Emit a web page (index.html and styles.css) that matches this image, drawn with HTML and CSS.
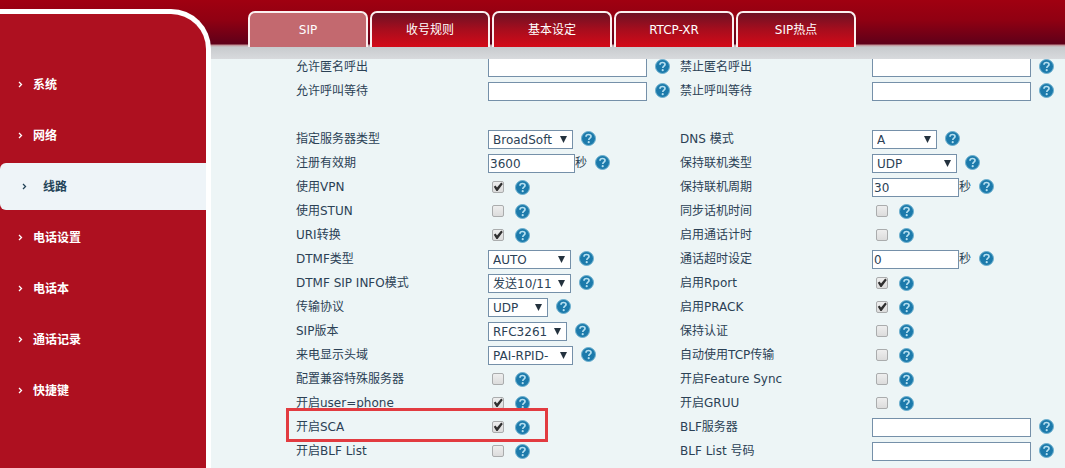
FILE: index.html
```html
<!DOCTYPE html>
<html lang="zh-CN">
<head>
<meta charset="utf-8">
<meta name="viewport" content="width=device-width, initial-scale=1">
<title>SIP 线路设置</title>
<link rel="stylesheet" href="styles.css">
</head>
<body>
<svg class="sprite" aria-hidden="true">
  <symbol id="help" viewBox="0 0 15 15">
    <circle cx="7.5" cy="7.5" r="7" fill="#1c7aab" stroke="#6db0cf" stroke-width="1"/>
    <path d="M5 5.7C5 4.2 6 3.5 7.5 3.5s2.5.8 2.5 2c0 1.6-2.2 1.7-2.2 3.4" fill="none" stroke="#b5dff0" stroke-width="1.7"/>
    <circle cx="7.7" cy="11.2" r="1.1" fill="#b5dff0"/>
  </symbol>
  <symbol id="chevron" viewBox="0 0 5 7">
    <path d="M1 1l2.5 2.5L1 6" fill="none" stroke="currentColor" stroke-width="1.3"/>
  </symbol>
</svg>
<div class="page">
  <header class="topbar">
    <nav class="tabs">
      <a class="tab tab-active" href="#sip">SIP</a>
      <a class="tab" href="#dial">收号规则</a>
      <a class="tab" href="#basic">基本设定</a>
      <a class="tab" href="#rtcp">RTCP-XR</a>
      <a class="tab" href="#hotspot">SIP热点</a>
    </nav>
  </header>
  <nav class="sidebar">
    <a class="item" href="#system"><svg class="chevron"><use href="#chevron"/></svg>系统</a>
    <a class="item" href="#network"><svg class="chevron"><use href="#chevron"/></svg>网络</a>
    <a class="item item-active" href="#line"><svg class="chevron"><use href="#chevron"/></svg>线路</a>
    <a class="item" href="#phone"><svg class="chevron"><use href="#chevron"/></svg>电话设置</a>
    <a class="item" href="#book"><svg class="chevron"><use href="#chevron"/></svg>电话本</a>
    <a class="item" href="#log"><svg class="chevron"><use href="#chevron"/></svg>通话记录</a>
    <a class="item" href="#keys"><svg class="chevron"><use href="#chevron"/></svg>快捷键</a>
  </nav>
  <main class="content">
    <form class="form">
      <label class="name" for="anon-on">允许匿名呼出</label>
      <div class="field"><input class="text long" id="anon-on" type="text"><button class="help" type="button" aria-label="帮助"><svg><use href="#help"/></svg></button></div>
      <label class="name" for="anon-off">禁止匿名呼出</label>
      <div class="field"><input class="text long" id="anon-off" type="text"><button class="help" type="button" aria-label="帮助"><svg><use href="#help"/></svg></button></div>

      <label class="name" for="wait-on">允许呼叫等待</label>
      <div class="field"><input class="text long" id="wait-on" type="text"><button class="help" type="button" aria-label="帮助"><svg><use href="#help"/></svg></button></div>
      <label class="name" for="wait-off">禁止呼叫等待</label>
      <div class="field"><input class="text long" id="wait-off" type="text"><button class="help" type="button" aria-label="帮助"><svg><use href="#help"/></svg></button></div>

      <div class="spacer"></div>

      <label class="name" for="server">指定服务器类型</label>
      <div class="field"><span class="pick"><select class="w-l" id="server"><option>BroadSoft</option></select></span><button class="help" type="button" aria-label="帮助"><svg><use href="#help"/></svg></button></div>
      <label class="name" for="dns">DNS 模式</label>
      <div class="field"><span class="pick"><select class="w-s" id="dns"><option>A</option></select></span><button class="help" type="button" aria-label="帮助"><svg><use href="#help"/></svg></button></div>

      <label class="name" for="expire">注册有效期</label>
      <div class="field"><input class="text short" id="expire" type="text" value="3600"><span class="unit">秒</span><button class="help" type="button" aria-label="帮助"><svg><use href="#help"/></svg></button></div>
      <label class="name" for="keep">保持联机类型</label>
      <div class="field"><span class="pick"><select class="w-l" id="keep"><option>UDP</option></select></span><button class="help" type="button" aria-label="帮助"><svg><use href="#help"/></svg></button></div>

      <label class="name" for="vpn">使用VPN</label>
      <div class="field"><input class="check" id="vpn" type="checkbox" checked><button class="help" type="button" aria-label="帮助"><svg><use href="#help"/></svg></button></div>
      <label class="name" for="period">保持联机周期</label>
      <div class="field"><input class="text short" id="period" type="text" value="30"><span class="unit">秒</span><button class="help" type="button" aria-label="帮助"><svg><use href="#help"/></svg></button></div>

      <label class="name" for="stun">使用STUN</label>
      <div class="field"><input class="check" id="stun" type="checkbox"><button class="help" type="button" aria-label="帮助"><svg><use href="#help"/></svg></button></div>
      <label class="name" for="sync">同步话机时间</label>
      <div class="field"><input class="check" id="sync" type="checkbox"><button class="help" type="button" aria-label="帮助"><svg><use href="#help"/></svg></button></div>

      <label class="name" for="uri">URI转换</label>
      <div class="field"><input class="check" id="uri" type="checkbox" checked><button class="help" type="button" aria-label="帮助"><svg><use href="#help"/></svg></button></div>
      <label class="name" for="timer">启用通话计时</label>
      <div class="field"><input class="check" id="timer" type="checkbox"><button class="help" type="button" aria-label="帮助"><svg><use href="#help"/></svg></button></div>

      <label class="name" for="dtmf">DTMF类型</label>
      <div class="field"><span class="pick"><select class="w-m" id="dtmf"><option>AUTO</option></select></span><button class="help" type="button" aria-label="帮助"><svg><use href="#help"/></svg></button></div>
      <label class="name" for="timeout">通话超时设定</label>
      <div class="field"><input class="text short" id="timeout" type="text" value="0"><span class="unit">秒</span><button class="help" type="button" aria-label="帮助"><svg><use href="#help"/></svg></button></div>

      <label class="name" for="info">DTMF SIP INFO模式</label>
      <div class="field"><span class="pick"><select class="w-m" id="info"><option>发送10/11</option></select></span><button class="help" type="button" aria-label="帮助"><svg><use href="#help"/></svg></button></div>
      <label class="name" for="rport">启用Rport</label>
      <div class="field"><input class="check" id="rport" type="checkbox" checked><button class="help" type="button" aria-label="帮助"><svg><use href="#help"/></svg></button></div>

      <label class="name" for="transport">传输协议</label>
      <div class="field"><span class="pick"><select class="w-xs" id="transport"><option>UDP</option></select></span><button class="help" type="button" aria-label="帮助"><svg><use href="#help"/></svg></button></div>
      <label class="name" for="prack">启用PRACK</label>
      <div class="field"><input class="check" id="prack" type="checkbox" checked><button class="help" type="button" aria-label="帮助"><svg><use href="#help"/></svg></button></div>

      <label class="name" for="version">SIP版本</label>
      <div class="field"><span class="pick"><select class="w-rfc" id="version"><option>RFC3261</option></select></span><button class="help" type="button" aria-label="帮助"><svg><use href="#help"/></svg></button></div>
      <label class="name" for="auth">保持认证</label>
      <div class="field"><input class="check" id="auth" type="checkbox"><button class="help" type="button" aria-label="帮助"><svg><use href="#help"/></svg></button></div>

      <label class="name" for="caller">来电显示头域</label>
      <div class="field"><span class="pick"><select class="w-l" id="caller"><option>PAI-RPID-</option></select></span><button class="help" type="button" aria-label="帮助"><svg><use href="#help"/></svg></button></div>
      <label class="name" for="tcp">自动使用TCP传输</label>
      <div class="field"><input class="check" id="tcp" type="checkbox"><button class="help" type="button" aria-label="帮助"><svg><use href="#help"/></svg></button></div>

      <label class="name" for="compat">配置兼容特殊服务器</label>
      <div class="field"><input class="check" id="compat" type="checkbox"><button class="help" type="button" aria-label="帮助"><svg><use href="#help"/></svg></button></div>
      <label class="name" for="feature">开启Feature Sync</label>
      <div class="field"><input class="check" id="feature" type="checkbox"><button class="help" type="button" aria-label="帮助"><svg><use href="#help"/></svg></button></div>

      <label class="name" for="userphone">开启user=phone</label>
      <div class="field"><input class="check" id="userphone" type="checkbox" checked><button class="help" type="button" aria-label="帮助"><svg><use href="#help"/></svg></button></div>
      <label class="name" for="gruu">开启GRUU</label>
      <div class="field"><input class="check" id="gruu" type="checkbox"><button class="help" type="button" aria-label="帮助"><svg><use href="#help"/></svg></button></div>

      <label class="name marked" for="sca">开启SCA</label>
      <div class="field"><input class="check" id="sca" type="checkbox" checked><button class="help" type="button" aria-label="帮助"><svg><use href="#help"/></svg></button></div>
      <label class="name" for="blf-server">BLF服务器</label>
      <div class="field"><input class="text long" id="blf-server" type="text"><button class="help" type="button" aria-label="帮助"><svg><use href="#help"/></svg></button></div>

      <label class="name" for="blf">开启BLF List</label>
      <div class="field"><input class="check" id="blf" type="checkbox"><button class="help" type="button" aria-label="帮助"><svg><use href="#help"/></svg></button></div>
      <label class="name" for="blf-number">BLF List 号码</label>
      <div class="field"><input class="text long" id="blf-number" type="text"><button class="help" type="button" aria-label="帮助"><svg><use href="#help"/></svg></button></div>
    </form>
  </main>
</div>
</body>
</html>
```
FILE: styles.css
```css
*, *::before, *::after { box-sizing: border-box; }

body {
  margin: 0;
  background: #edf5f6;
  color: #2b4155;
  font: 12px/16px "DejaVu Sans", "Noto Sans CJK SC", sans-serif;
}

a { color: inherit; text-decoration: none; }

.sprite { display: none; }

.page {
  display: grid;
  grid-template-columns: 211px minmax(0, 1fr);
  grid-template-rows: 59px minmax(0, 1fr);
  height: 100vh;
  overflow: hidden;
}

.topbar {
  grid-column: 1 / -1;
  grid-row: 1;
  z-index: 1;
  padding: 11px 0 0 248px;
  background: linear-gradient(#a00011 0, #900012 20px, #5f0019 44px, #c08d92 45px, #c8cbce 47px, #d8dadd 59px);
}

.tabs { display: flex; gap: 2px; }

.tab {
  width: 120px;
  height: 36px;
  border: 2px solid #fbf0f0;
  border-bottom: 0;
  border-radius: 7px 7px 0 0;
  background: linear-gradient(#6d1124, #a80d1d 50%, #d40a18);
  color: #fff;
  line-height: 34px;
  text-align: center;
}

.tab-active { background: #c3696f; }

.sidebar {
  grid-column: 1;
  grid-row: 1 / 3;
  z-index: 2;
  display: flex;
  flex-direction: column;
  gap: 4px;
  margin-top: 9px;
  padding-top: 47px;
  border: solid #fff;
  border-width: 5px 5px 0 0;
  border-top-right-radius: 40px;
  background: #ae1020;
}

.item {
  display: flex;
  align-items: center;
  gap: 10px;
  height: 47px;
  padding-left: 18px;
  color: #fff;
  font-weight: bold;
}

.item-active {
  gap: 16px;
  padding-left: 22px;
  border-radius: 6px 0 0 6px;
  background: #eef4f8;
  color: #234358;
}

.chevron { width: 5px; height: 7px; }

.content {
  grid-column: 2;
  grid-row: 2;
  overflow: hidden;
}

.form {
  display: grid;
  grid-template-columns: repeat(4, minmax(0, 1fr));
  grid-auto-rows: 24px;
  margin-top: -4px;
  padding: 0 1px 0 85px;
}

.spacer { grid-column: 1 / -1; }

.name {
  line-height: 24px;
  white-space: nowrap;
}

.marked { position: relative; }

/* Frame round the highlighted setting */
.marked::after {
  content: "";
  position: absolute;
  top: -7px;
  left: -10px;
  width: calc(100% + 70px);
  height: 34px;
  border: 3px solid #e23b40;
  pointer-events: none;
}

.field {
  display: flex;
  align-items: center;
}

.text, .pick { margin: 1px 0 0; }

.text, .pick select {
  height: 19px;
  border: 1px solid #7590a9;
  border-radius: 0;
  background: #fff;
  color: #2b4155;
  font: inherit;
}

.text { padding: 0 1px; }
.long { width: 159px; }
.short { width: 87px; }

.pick { position: relative; display: flex; }

.pick select {
  appearance: none;
  margin: 0;
  padding: 0 0 0 4px;
}

.pick::after {
  content: "";
  position: absolute;
  top: 6px;
  right: 6px;
  width: 7px;
  height: 7px;
  background: #24323e;
  clip-path: polygon(0 0, 100% 0, 50% 100%);
  pointer-events: none;
}

.w-xs { width: 60px; }
.w-s { width: 65px; }
.w-rfc { width: 79px; }
.w-m { width: 83px; }
.w-l { width: 85px; }

.check {
  appearance: none;
  width: 12px;
  height: 12px;
  margin: 0 3px 0 4px;
  border: 1px solid #aaacad;
  border-radius: 2px;
  background: linear-gradient(#eee, #dcdcdc);
}

.check:checked::before {
  content: "";
  display: block;
  height: 10px;
  background: #303030;
  clip-path: polygon(8% 48%, 25% 36%, 40% 55%, 82% 6%, 98% 20%, 46% 90%, 34% 90%);
}

.help {
  width: 15px;
  height: 15px;
  margin: 0 0 2px 8px;
  padding: 0;
  border: 0;
  background: none;
}

.check + .help { margin-bottom: 0; }

.help svg { display: block; width: 15px; height: 15px; }
```
